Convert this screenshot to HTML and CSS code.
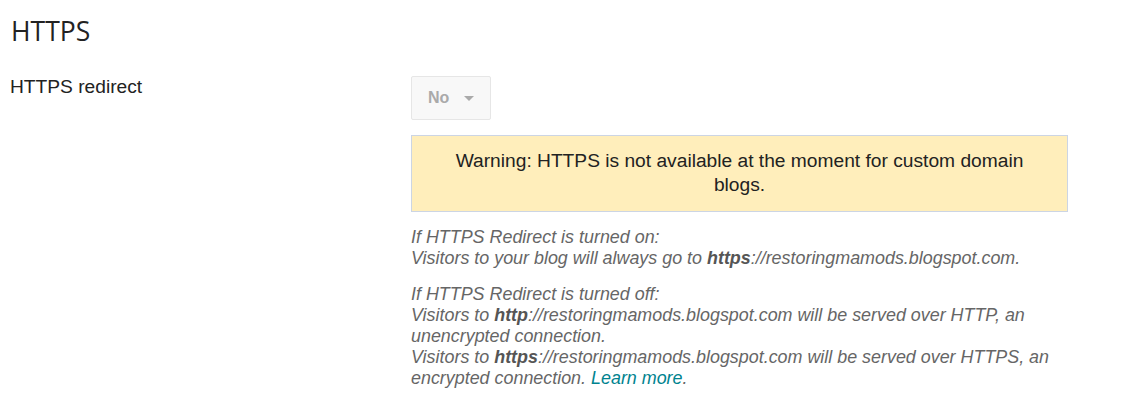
FILE: index.html
```html
<!DOCTYPE html>
<html lang="en">
<head>
    <meta charset="UTF-8">
    <title>HTTPS settings</title>
    <link rel="stylesheet" href="styles.css">
</head>
<body>
    <div class="settings-section">
        <h2 class="settings-title">HTTPS</h2>
        <div class="settings-row">
            <div class="settings-label">HTTPS redirect</div>
            <div class="settings-control">
                <div class="dropdown">
                    <span class="dropdown-value">No</span>
                    <span class="dropdown-arrow"></span>
                </div>
                <div class="warning">
                    Warning: HTTPS is not available at the moment for custom domain blogs.
                </div>
                <div class="help">
                    <p>If HTTPS Redirect is turned on:<br>
                    Visitors to your blog will always go to <b>https</b>://restoringmamods.blogspot.com.</p>
                    <p>If HTTPS Redirect is turned off:<br>
                    Visitors to <b>http</b>://restoringmamods.blogspot.com will be served over HTTP, an unencrypted connection.<br>
                    Visitors to <b>https</b>://restoringmamods.blogspot.com will be served over HTTPS, an encrypted connection. <a href="#" class="help-link">Learn more</a>.</p>
                </div>
            </div>
        </div>
    </div>
</body>
</html>
```

FILE: styles.css
```css
body {
    margin: 0;
    background: #fff;
    color: #222;
    font-family: 'Liberation Sans', Arial, sans-serif;
}

.settings-section {
    padding: 15px 0 0 10px;
}

.settings-title {
    margin: 0 0 0 1px;
    font-family: 'Open Sans', sans-serif;
    font-size: 26.5px;
    font-weight: normal;
    line-height: 32px;
    color: #222;
}

.settings-row {
    display: flex;
    margin-top: 28px;
}

.settings-label {
    width: 401px;
    flex-shrink: 0;
    font-size: 19.2px;
    line-height: 24px;
}

.settings-control {
    width: 657px;
}

.dropdown {
    display: flex;
    align-items: center;
    box-sizing: border-box;
    width: 80px;
    height: 44px;
    margin-top: 1px;
    padding: 0 0 0 16px;
    background: #f8f8f8;
    border: 1px solid #e6e6e6;
    border-radius: 2px;
    color: #aaa;
    font-size: 16px;
    font-weight: bold;
}

.dropdown-arrow {
    margin-left: 15px;
    width: 0;
    height: 0;
    border-left: 5px solid transparent;
    border-right: 5px solid transparent;
    border-top: 5px solid #aaa;
}

.warning {
    box-sizing: border-box;
    margin-top: 15px;
    padding: 13px 30px 14px;
    background: #ffeebb;
    border: 1px solid #ccd5e4;
    text-align: center;
    font-size: 19.2px;
    line-height: 24px;
    color: #222;
}

.help {
    margin-top: 15px;
    font-size: 17.9px;
    line-height: 21px;
    font-style: italic;
    color: #666;
}

.help p {
    margin: 0 0 15px;
}

.help b {
    color: #555;
}

.help-link {
    color: #00838f;
    text-decoration: none;
}
```
